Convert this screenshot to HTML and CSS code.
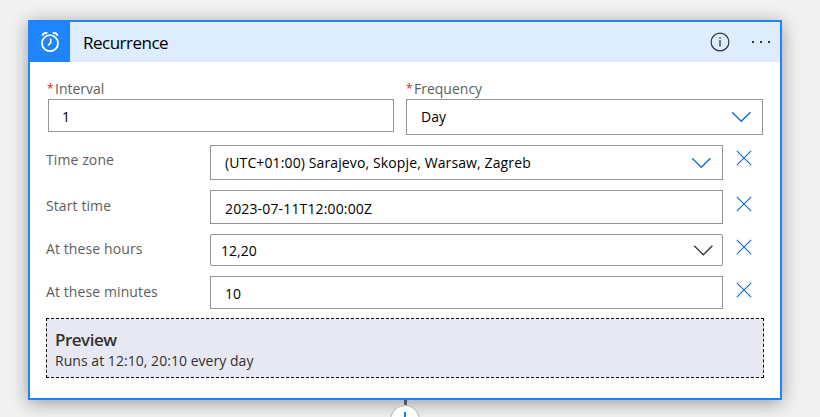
FILE: index.html
```html
<!DOCTYPE html>
<html lang="en">
<head>
<meta charset="utf-8">
<title>Recurrence</title>
<link rel="stylesheet" href="styles.css">
</head>
<body>
<main class="canvas">
  <section class="card">
    <header class="card-header">
      <div class="tile">
        <svg width="20" height="22" viewBox="0 0 20 22" fill="none" stroke="#fff">
          <circle cx="10" cy="12.2" r="8" stroke-width="1.8"/>
          <path d="M10.7 7.5v4.2L8 14.5" stroke-width="1.7"/>
          <path d="M2.3 4.7C3 2.8 5 1.7 7.3 2.1M17.700 4.700C17 2.800 15 1.700 12.700 2.100" stroke-width="2"/>
        </svg>
      </div>
      <h1 class="title"><span>Recurrence</span></h1>
      <svg class="info" width="20" height="20" viewBox="0 0 20 20" fill="none" stroke="#333">
        <circle cx="10" cy="10" r="8.9" stroke-width="1.2"/>
        <path d="M10 8v6.500M10 5.300v1.400" stroke-width="1.300"/>
      </svg>
      <svg class="more" width="20" height="4" viewBox="0 0 20 4" fill="#333">
        <path d="M1 1h2v2H1zM9 1h2v2H9zM17 1h2v2h-2z"/>
      </svg>
    </header>
    <div class="body">
      <div class="pair">
        <div class="field interval">
          <label class="label"><span class="star">*</span><span class="t-interval">Interval</span></label>
          <div class="box"><span class="t-one">1</span></div>
        </div>
        <div class="field frequency">
          <label class="label"><span class="star">*</span><span class="t-frequency">Frequency</span></label>
          <div class="box"><span class="t-day">Day</span><svg class="chev" width="20" height="12" viewBox="0 0 20 12"><path d="M1.200 1.200l9.100 9.100L19.400 1.200"/></svg></div>
        </div>
      </div>
      <div class="row zone">
        <label class="label t-zone">Time zone</label>
        <div class="box"><span class="t-utc">(UTC+01:00) Sarajevo, Skopje, Warsaw, Zagreb</span><svg class="chev" width="20" height="12" viewBox="0 0 20 12"><path d="M1.200 1.200l9.100 9.100L19.400 1.200"/></svg></div>
        <svg class="close" width="16" height="16" viewBox="0 0 16 16"><path d="M.8.8l14.400 14.400M15.200.8L.8 15.200"/></svg>
      </div>
      <div class="row start">
        <label class="label t-start">Start time</label>
        <div class="box"><span class="t-date">2023-07-11T12:00:00Z</span></div>
        <svg class="close" width="16" height="16" viewBox="0 0 16 16"><path d="M.8.8l14.400 14.400M15.200.8L.8 15.200"/></svg>
      </div>
      <div class="row hours">
        <label class="label t-hours">At these hours</label>
        <div class="box"><span class="t-1220">12,20</span><svg class="chev" width="20" height="12" viewBox="0 0 20 12"><path d="M1.200 1.700l9.100 9.100L19.400 1.700"/></svg></div>
        <svg class="close" width="16" height="16" viewBox="0 0 16 16"><path d="M.8.8l14.400 14.400M15.200.8L.8 15.200"/></svg>
      </div>
      <div class="row minutes">
        <label class="label t-minutes">At these minutes</label>
        <div class="box"><span class="t-10">10</span></div>
        <svg class="close" width="16" height="16" viewBox="0 0 16 16"><path d="M.8.8l14.400 14.400M15.200.8L.8 15.200"/></svg>
      </div>
      <div class="preview">
        <h2><span>Preview</span></h2>
        <p><span>Runs at 12:10, 20:10 every day</span></p>
      </div>
    </div>
  </section>
  <div class="connector">
    <svg width="32" height="17" viewBox="0 0 32 17">
      <path d="M16.500 0v6" stroke="#555" stroke-width="3"/>
      <circle cx="16" cy="20" r="14.500" fill="#fff" stroke="#c8c6c4" stroke-width="1.300"/>
      <path d="M16 12v5" stroke="#1f7fd6" stroke-width="2"/>
    </svg>
  </div>
</main>
</body>
</html>
```

FILE: styles.css
```css
* { box-sizing: border-box; }
html, body { margin: 0; height: 100%; overflow: hidden; }
body { background: #f1f1f1; font-family: "Open Sans", "Noto Sans", sans-serif; font-size: 14px; color: #000; }
.canvas { height: 417px; padding: 20px 38px 0 28px; overflow: hidden; }
.card { width: 754px; height: 380px; border: 2px solid #1f85ff; background: #fff; box-shadow: 0 3px 17px rgba(0, 0, 0, .36); }
.card-header { display: flex; align-items: center; height: 40px; background: #deecff; padding-right: 9px; }
.tile { width: 40px; height: 40px; background: #1f85ff; display: flex; align-items: center; justify-content: center; }
.title { margin: 0 auto 0 13px; font-size: 17px; font-weight: 400; line-height: 40px; padding-top: 1px; letter-spacing: -.5px; }
.info { margin: 0 21px 1px 0; }
.more { margin-bottom: 1px; }
.body { padding: 17px 16px 0; }
.pair { display: flex; gap: 12px; height: 56px; margin-bottom: 10px; }
.interval { width: 348px; padding-left: 2px; }
.frequency { width: 357px; }
.label { display: block; color: #605e5c; line-height: 19px; white-space: nowrap; }
.pair .label { display: flex; height: 20px; }
.interval .label { margin-left: -2px; }
.frequency .label { margin-left: -1px; }
.star { color: #e0222f; width: 9px; font-size: 12px; padding-left: 1px; }
.box { display: flex; align-items: center; justify-content: space-between; border: 1px solid #979593; background: #fff; padding: 0 11px 0 14px; white-space: nowrap; }
.interval .box { height: 33px; }
.frequency .box { height: 36px; }
.t-one { margin: 1px 0 0 -1px; }
.t-day { margin-bottom: 2px; }
.chev { fill: none; stroke: #0f6cd0; stroke-width: 1.3; }
.close { fill: none; stroke: #0f6cd0; stroke-width: 1.1; }
.row { display: grid; grid-template-columns: 164px 513px 16px; align-items: center; }
.row .close { margin-left: 13px; }
.zone { height: 35px; margin-bottom: 10px; }
.start { height: 34px; margin-bottom: 10px; }
.hours { height: 32px; margin-bottom: 10px; }
.minutes { height: 33px; margin-bottom: 9px; }
.row .box { height: 100%; }
.row .label { letter-spacing: .1px; }
.zone .label { padding-bottom: 7px; }
.zone .close { margin-bottom: 9px; }
.start .label { padding-bottom: 4px; }
.start .close { margin-bottom: 6px; }
.start .box { padding-top: 2px; }
.hours .label { padding-bottom: 4px; }
.hours .close { margin-bottom: 6px; }
.hours .box { border-radius: 2px; padding: 0 9px 0 10px; }
.hours .chev { stroke: #333; }
.minutes .label { padding-bottom: 3px; }
.minutes .close { margin-bottom: 5px; }
.minutes .box { padding-top: 1px; }
.preview { width: 718px; height: 60px; border: 1px dashed #000; background: #e8e8f3; padding: 10px 8px 0; color: #323130; }
.preview h2 { margin: 0; font-size: 17px; font-weight: 600; line-height: 22px; letter-spacing: -.5px; }
.preview p { margin: 0; line-height: 20px; letter-spacing: .04px; }
.connector { display: flex; justify-content: center; width: 754px; height: 17px; }
.t-utc { letter-spacing: .12px; }
.t-date { letter-spacing: .15px; }
```
